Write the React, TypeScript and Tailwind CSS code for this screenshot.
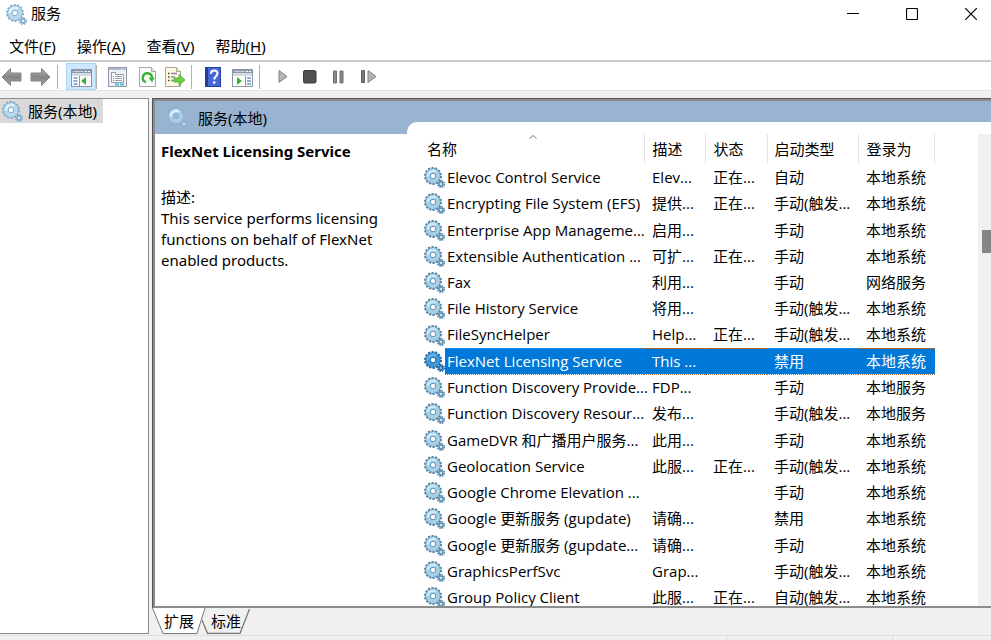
import React from 'react';

type Service = [name: string, desc: string, status: string, startup: string, logon: string];

const services: Service[] = [
  ['Elevoc Control Service', 'Elev...', '正在...', '自动', '本地系统'],
  ['Encrypting File System (EFS)', '提供...', '正在...', '手动(触发...', '本地系统'],
  ['Enterprise App Manageme...', '启用...', '', '手动', '本地系统'],
  ['Extensible Authentication ...', '可扩...', '正在...', '手动', '本地系统'],
  ['Fax', '利用...', '', '手动', '网络服务'],
  ['File History Service', '将用...', '', '手动(触发...', '本地系统'],
  ['FileSyncHelper', 'Help...', '正在...', '手动(触发...', '本地系统'],
  ['FlexNet Licensing Service', 'This ...', '', '禁用', '本地系统'],
  ['Function Discovery Provide...', 'FDP...', '', '手动', '本地服务'],
  ['Function Discovery Resour...', '发布...', '', '手动(触发...', '本地服务'],
  ['GameDVR 和广播用户服务...', '此用...', '', '手动', '本地系统'],
  ['Geolocation Service', '此服...', '正在...', '手动(触发...', '本地系统'],
  ['Google Chrome Elevation ...', '', '', '手动', '本地系统'],
  ['Google 更新服务 (gupdate)', '请确...', '', '禁用', '本地系统'],
  ['Google 更新服务 (gupdate...', '请确...', '', '手动', '本地系统'],
  ['GraphicsPerfSvc', 'Grap...', '', '手动(触发...', '本地系统'],
  ['Group Policy Client', '此服...', '正在...', '自动(触发...', '本地系统'],
];

const menus = [
  { label: '文件', key: 'F' },
  { label: '操作', key: 'A' },
  { label: '查看', key: 'V' },
  { label: '帮助', key: 'H' },
];

const gearTones = {
  normal: { teeth: '#557f9f', body: '#a4cfe6', rim: '#6797b8', light: '#cde8f4', hole: '#ffffff' },
  pale: { teeth: '#86adc8', body: '#b5daec', rim: '#86b0cd', light: '#def2fa', hole: '#ffffff' },
  selected: { teeth: '#1f6aa9', body: '#3f97d8', rim: '#2470b3', light: '#67b3e8', hole: '#ffffff' },
  faded: { teeth: '#8fafca', body: '#a9cfe8', rim: '#90b6d4', light: '#d8f2fc', hole: '#99b4d1' },
};

function Gears({ tone = 'normal' }: { tone?: keyof typeof gearTones }) {
  const c = gearTones[tone];
  return (
    <svg className="size-[21px] shrink-0" viewBox="0 0 21 21" fill="none" aria-hidden="true">
      <circle cx="9" cy="9" r="8" stroke={c.teeth} strokeWidth="2" strokeDasharray="2.2 1.39" />
      <circle cx="9" cy="9" r="5.200" stroke={c.rim} strokeWidth="5" />
      <circle cx="9" cy="9" r="5" stroke={c.body} strokeWidth="4" />
      <path d="M3.800 9.200A5.200 5.200 0 0 1 12 4.800" stroke={c.light} strokeWidth="2.400" />
      <circle cx="9" cy="9" r="2.700" fill={c.hole} stroke={c.rim} />
      <circle cx="17" cy="17" r="3.300" stroke={c.teeth} strokeWidth="1.500" strokeDasharray="1.500 1.092" />
      <circle cx="17" cy="17" r="2" stroke={c.rim} strokeWidth="1.800" />
      <circle cx="17" cy="17" r="1.100" fill={c.light} />
    </svg>
  );
}

function Arrow({ right = false }: { right?: boolean }) {
  const id = right ? 'arrow-forward' : 'arrow-back';
  return (
    <svg className="h-5 w-[21px]" viewBox="0 0 21 20" aria-hidden="true">
      <defs>
        <linearGradient id={id} x1="0" y1="0" x2="0" y2="1">
          <stop offset="0" stopColor="#b4b4b4" />
          <stop offset="0.5" stopColor="#858585" />
          <stop offset="1" stopColor="#a4a4a4" />
        </linearGradient>
      </defs>
      <path
        d={right ? 'M20 10 11.5 1.5V6H1v8h10.5v4.5z' : 'M1 10 9.5 1.5V6H20v8H9.5v4.5z'}
        fill={`url(#${id})`}
        stroke="#868686"
        strokeLinejoin="round"
      />
    </svg>
  );
}

function PaneIcon({ action = false }: { action?: boolean }) {
  return (
    <svg className="h-[18px] w-[21px]" viewBox="0 0 21 18" aria-hidden="true">
      <rect x="0.5" y="0.5" width="20" height="17" fill="#fff" stroke="#8b96a4" />
      <rect x="1" y="1" width="19" height="3" fill="#8d99aa" />
      <path d="M2 2.500h11" stroke="#c4ccd7" />
      <path d="M14 2.500h2M17 2.500h2" stroke="#fff" />
      <rect x="1" y="4" width="19" height="3" fill="#d5dbe3" />
      {action ? (
        <>
          <path d="M13.500 7v10" stroke="#8b96a4" />
          <path d="M15 9h4M15 12h4M15 15h4" stroke="#6b96c6" strokeWidth="1.400" />
          <path d="M5 8v8l5-4z" fill="#35b42a" />
        </>
      ) : (
        <>
          <path d="M8.500 7v10" stroke="#8b96a4" />
          <path d="M2.500 9h4M2.500 12h4M2.500 15h4" stroke="#6b96c6" strokeWidth="1.400" />
          <path d="M15 8v8l-5-4z" fill="#35b42a" />
        </>
      )}
    </svg>
  );
}

function PropertiesIcon() {
  return (
    <svg className="h-5 w-[19px]" viewBox="0 0 19 20" aria-hidden="true">
      <rect x="0.5" y="0.5" width="18" height="19" fill="#eef1f5" stroke="#8f99a6" />
      <path d="M1 2h17" stroke="#aeb8c5" strokeWidth="2" />
      <path d="M13 2h1M15.500 2h1" stroke="#fff" />
      <path d="M3.500 5.500h4v2h8v8h-12z" fill="#fff" stroke="#8f9caa" />
      <path d="M5 9.500h1M5 11.500h1M5 13.500h1" stroke="#4280c8" />
      <path d="M7 9.500h7M7 11.500h7M7 13.500h7" stroke="#97a3b1" />
      <path d="M7 17.500h4M12 17.500h4" stroke="#53b5df" strokeWidth="2" />
    </svg>
  );
}

function RefreshIcon() {
  return (
    <svg className="h-5 w-[17px]" viewBox="0 0 17 20" fill="none" aria-hidden="true">
      <path d="M.500.500h12l4 4v15H.500z" fill="#fafafa" stroke="#a6a6a6" />
      <path d="M12.500.500v4h4" fill="#e5e5e5" stroke="#a6a6a6" />
      <path d="M7 15.200A4.600 4.600 0 1 1 13 10.500" stroke="#36b531" strokeWidth="2.400" />
      <path d="M15.800 10.500H9.500l3.500 4.800z" fill="#36b531" />
    </svg>
  );
}

function ExportIcon() {
  return (
    <svg className="h-5 w-[21px]" viewBox="0 0 21 20" fill="none" aria-hidden="true">
      <path d="M.500.500h11l4 4v15H.500z" fill="#fdf9df" stroke="#aaa68f" />
      <path d="M11.500.500v4h4" fill="#eee6c1" stroke="#aaa68f" />
      <path d="M3 6.500h1.500M3 10h1.500M3 13.500h1.500" stroke="#444" strokeWidth="1.300" />
      <path d="M6 6.500h6M6 10h4M6 13.500h4" stroke="#8e86ad" strokeWidth="1.300" />
      <path d="M9 11h5V7.500l6 5.500-6 5.500V15H9z" fill="#68d143" stroke="#49ad2d" strokeWidth="0.800" />
    </svg>
  );
}

function HelpIcon() {
  return (
    <svg className="h-5 w-4" viewBox="0 0 16 20" fill="none" aria-hidden="true">
      <rect x="0.500" y="0.500" width="15" height="19" fill="#4468d4" stroke="#24419b" />
      <path d="M1 1h2v18H1z" fill="#213c9b" />
      <path d="M6 6.700C6 4 8 3.500 9.300 3.500c2 0 3.200 1.200 3.200 2.800 0 2.700-3.200 3-3.200 6.200" stroke="#fff" strokeWidth="2" />
      <circle cx="9.200" cy="15.500" r="1.300" fill="#fff" />
    </svg>
  );
}

function Separator() {
  return <div className="h-6 w-px shrink-0 bg-[#b0b0b0]" />;
}

function ToolButton({ label, className = '', children }: { label: string; className?: string; children: React.ReactNode }) {
  return (
    <button type="button" aria-label={label} className={`flex shrink-0 items-center justify-center ${className}`}>
      {children}
    </button>
  );
}

function TitleBar() {
  return (
    <header className="flex h-7 shrink-0 items-center bg-white pl-[6px]">
      <Gears tone="pale" />
      <h1 className="ml-1 flex-1 pb-[2px] text-[15px] leading-5">服务</h1>
      <div className="flex gap-[19px]">
        <button type="button" aria-label="最小化" className="flex h-7 w-10 items-center justify-center">
          <svg className="size-3" viewBox="0 0 12 12" aria-hidden="true"><path d="M0 5.500h12" stroke="#000" /></svg>
        </button>
        <button type="button" aria-label="最大化" className="flex h-7 w-10 items-center justify-center">
          <svg className="size-3" viewBox="0 0 12 12" aria-hidden="true"><rect x="0.500" y="0.500" width="11" height="11" rx="1" fill="none" stroke="#000" strokeWidth="1.200" /></svg>
        </button>
        <button type="button" aria-label="关闭" className="flex h-7 w-10 items-center justify-center">
          <svg className="size-3" viewBox="0 0 12 12" aria-hidden="true"><path d="m0 0 12 12M12 0 0 12" stroke="#000" strokeWidth="1.200" /></svg>
        </button>
      </div>
    </header>
  );
}

function Toolbar() {
  return (
    <div className="flex h-[31px] shrink-0 items-center border-t-2 border-b border-t-[#c8cacc] border-b-[#e2e2e2] bg-white pt-px pl-px">
      <ToolButton label="后退"><Arrow /></ToolButton>
      <ToolButton label="前进" className="mr-[6px] ml-2"><Arrow right /></ToolButton>
      <Separator />
      <ToolButton label="显示/隐藏控制台树" className="ml-2 h-[27px] w-[30px] border border-[#a6d4f5] bg-[#cce8ff] pt-[3px]"><PaneIcon /></ToolButton>
      <Separator />
      <ToolButton label="属性" className="ml-[11px]"><PropertiesIcon /></ToolButton>
      <ToolButton label="刷新" className="ml-3"><RefreshIcon /></ToolButton>
      <ToolButton label="导出列表" className="mr-[5px] ml-[9px]"><ExportIcon /></ToolButton>
      <Separator />
      <ToolButton label="帮助" className="ml-[13px]"><HelpIcon /></ToolButton>
      <ToolButton label="显示/隐藏操作窗格" className="mr-[6px] ml-[11px] pt-[3px]"><PaneIcon action /></ToolButton>
      <Separator />
      <ToolButton label="启动服务" className="ml-[18px]">
        <svg className="h-[15px] w-[10px]" viewBox="0 0 10 15" aria-hidden="true"><path d="M1 1.500v12l8-6z" fill="#b4b4b4" stroke="#808080" /></svg>
      </ToolButton>
      <ToolButton label="停止服务" className="ml-[15px]">
        <svg className="size-[14px]" viewBox="0 0 14 14" aria-hidden="true"><rect x="0.500" y="0.500" width="12.500" height="12.500" rx="1.500" fill="#505050" stroke="#3d3d3d" /></svg>
      </ToolButton>
      <ToolButton label="暂停服务" className="ml-4">
        <svg className="h-[14px] w-[11px]" viewBox="0 0 11 14" aria-hidden="true"><path d="M.500 1h3v12h-3zM7 1h3v12H7z" fill="#888" stroke="#707070" /></svg>
      </ToolButton>
      <ToolButton label="重启动服务" className="ml-[17px]">
        <svg className="h-[15px] w-4" viewBox="0 0 16 15" aria-hidden="true"><path d="M.500 1.500h3v12h-3z" fill="#777" stroke="#606060" /><path d="M7 1.500v12l8-6z" fill="#b4b4b4" stroke="#808080" /></svg>
      </ToolButton>
    </div>
  );
}

function ServiceTable() {
  return (
    <table className="w-[515px] table-fixed border-collapse text-left font-['Open_Sans','Noto_Sans_CJK_SC',sans-serif] text-[15px] leading-5 whitespace-nowrap">
      <colgroup>
        <col className="w-[25px]" />
        <col className="w-[199px]" />
        <col className="w-[61px]" />
        <col className="w-[62px]" />
        <col className="w-[91px]" />
        <col />
      </colgroup>
      <thead>
        <tr className="h-[30px]">
          <th colSpan={2} className="relative border-r border-[#e5e5e5] p-0 pl-[7px] font-normal" aria-sort="ascending">
            名称
            <svg className="absolute top-px left-[109px] h-1 w-2" viewBox="0 0 8 4" fill="none" aria-hidden="true"><path d="m.500 3.500 3.500-3 3.500 3" stroke="#777" /></svg>
          </th>
          <th className="border-r border-[#e5e5e5] p-0 pl-2 font-normal">描述</th>
          <th className="border-r border-[#e5e5e5] p-0 pl-2 font-normal">状态</th>
          <th className="border-r border-[#e5e5e5] p-0 pl-[7px] font-normal">启动类型</th>
          <th className="border-r border-[#e5e5e5] p-0 pl-2 font-normal">登录为</th>
        </tr>
      </thead>
      <tbody>
        {services.map(([name, desc, status, startup, logon], i) => {
          const selected = name === 'FlexNet Licensing Service';
          const fill = selected ? 'border-y border-dotted border-[#b5713a] bg-[#0078d7] text-white' : '';
          return (
            <tr key={i} aria-selected={selected} className="h-[26px] nth-[4n+2]:h-[27px]">
              <td className="p-0 pl-1"><Gears tone={selected ? 'selected' : 'normal'} /></td>
              <td className={`p-0 pb-px pl-[2px] ${fill}`}>{name}</td>
              <td className={`p-0 pb-px pl-2 ${fill}`}>{desc}</td>
              <td className={`p-0 pb-px pl-2 ${fill}`}>{status}</td>
              <td className={`p-0 pb-px pl-[7px] ${fill}`}>{startup}</td>
              <td className={`p-0 pb-px pl-2 ${fill}`}>{logon}</td>
            </tr>
          );
        })}
      </tbody>
    </table>
  );
}

function ViewTabs() {
  return (
    <div role="tablist" className="flex h-[26px] shrink-0 text-[15px] leading-5">
      <button type="button" role="tab" aria-selected="true" className="relative z-10 h-[26px] w-[54px]">
        <svg className="absolute inset-0 h-full w-full" viewBox="0 0 54 26" aria-hidden="true">
          <path d="M.500 0 11 25.500h34L53 0" fill="#fff" stroke="#777" />
        </svg>
        <span className="relative">扩展</span>
      </button>
      <button type="button" role="tab" aria-selected="false" className="relative -ml-1 h-[26px] w-12">
        <svg className="absolute inset-0 h-full w-full" viewBox="0 0 48 26" aria-hidden="true">
          <path d="m0 12 5.500 13.500H38L47.500 1" fill="#f0f0f0" stroke="#777" strokeWidth="1.300" />
        </svg>
        <span className="relative">标准</span>
      </button>
    </div>
  );
}

export default function App() {
  return (
    <div className="flex h-screen flex-col overflow-hidden bg-[#f0f0f0] font-['Noto_Sans','Noto_Sans_CJK_SC',sans-serif] text-black">
      <TitleBar />
      <nav className="flex h-8 shrink-0 items-center gap-[21px] bg-white pt-1 pl-[9px] text-[15px] leading-5">
        {menus.map((m) => (
          <button key={m.key} type="button">
            {m.label}(<span className="underline underline-offset-2">{m.key}</span>)
          </button>
        ))}
      </nav>
      <Toolbar />
      <main className="flex min-h-0 flex-1 pt-[7px]">
        <aside className="w-[149px] shrink-0 border-t border-r border-b border-[#8a8d96] bg-white">
          <button type="button" className="flex h-6 items-center gap-[5px] bg-[#d9d9d9] pr-[6px] pl-[2px] text-[15px] leading-5">
            <Gears tone="pale" />
            服务(本地)
          </button>
        </aside>
        <div className="ml-[3px] flex min-w-0 flex-1 flex-col">
          <section className="flex min-h-0 flex-1 border-t border-l border-[#555] bg-[#99b4d1]">
            <div className="flex min-w-0 flex-1 border-t-2 border-b-2 border-l-2 border-[#8c8c8c]">
              <div className="flex w-[252px] shrink-0 flex-col">
                <div className="flex h-[33px] items-center gap-[10px] pl-3 text-[15px] leading-5">
                  <Gears tone="faded" />
                  <h2>服务(本地)</h2>
                </div>
                <div className="flex-1 bg-white pt-[7px] pl-[6px] text-[15px] leading-[21px]">
                  <h3 className="font-bold">FlexNet Licensing Service</h3>
                  <p className="mt-[25px]">描述:</p>
                  <p>This service performs licensing functions on behalf of FlexNet enabled products.</p>
                </div>
              </div>
              <div className="mt-[21px] flex min-w-0 flex-1 overflow-hidden rounded-tl-[10px] bg-white pt-3">
                <div className="min-w-0 flex-1 overflow-hidden pl-[13px]">
                  <ServiceTable />
                </div>
                <div className="w-[13px] shrink-0 bg-[#f0f0f0] pt-24 pl-1">
                  <div className="h-[23px] bg-[#858585]" />
                </div>
              </div>
            </div>
          </section>
          <ViewTabs />
        </div>
      </main>
      <footer className="mt-px flex h-[5px] shrink-0 border-t border-[#dedede]">
        <div className="flex-1 border-r border-[#d7d7d7]" />
        <div className="w-[166px] border-r border-[#d7d7d7]" />
        <div className="w-[98px]" />
      </footer>
    </div>
  );
}
